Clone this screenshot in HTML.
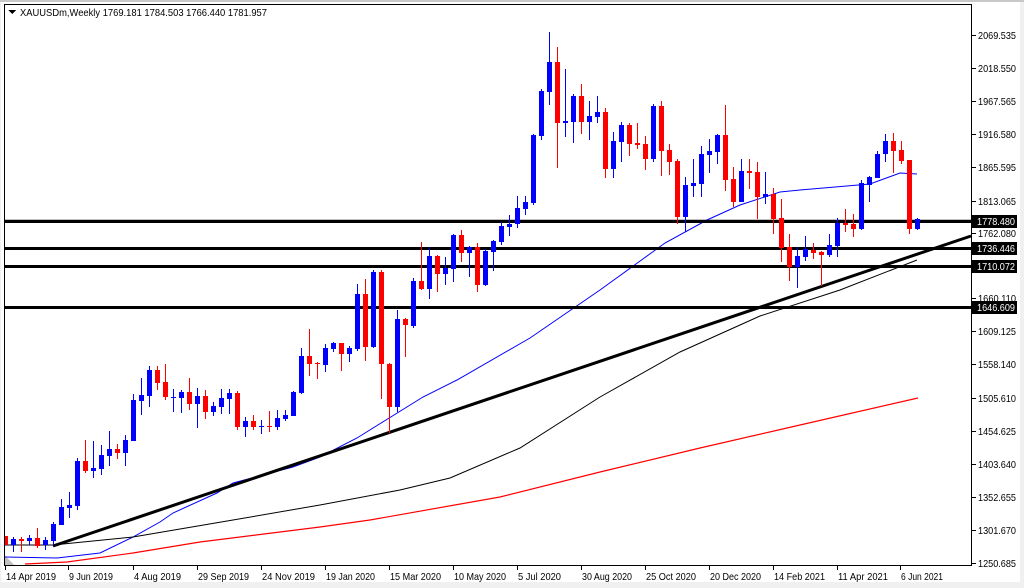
<!DOCTYPE html>
<html><head><meta charset="utf-8"><style>
html,body{margin:0;padding:0;background:#fff;width:1024px;height:588px;overflow:hidden}
svg{display:block}
text{font-family:"Liberation Sans",sans-serif;font-size:10.5px;fill:#000}
</style></head><body>
<svg id="s" width="1024" height="588" viewBox="0 0 1024 588" xmlns="http://www.w3.org/2000/svg" shape-rendering="crispEdges">
<rect x="0" y="0" width="1024" height="588" fill="#f0f0f0"/>
<rect x="1" y="2" width="1019" height="580" fill="#fff"/>
<line x1="0" y1="1" x2="1024" y2="1" stroke="#a0a0a0"/>
<rect x="4.5" y="4.5" width="967" height="561" fill="#fff" stroke="#000"/>
<polygon points="5,556 5,565 14,565" fill="#c0c0c0"/>
<polygon points="8,10 16,10 12,14" fill="#000"/>
<text x="20" y="16" textLength="247" lengthAdjust="spacingAndGlyphs">XAUUSDm,Weekly  1769.181 1784.503 1766.440 1781.957</text>
<g id="g"></g>
</svg>
<script>
var g=document.getElementById('g'),h='';
function L(pts,c,w){h+='<polyline fill="none" stroke="'+c+'" stroke-width="'+w+'" shape-rendering="auto" points="'+pts+'"/>';}
h+='<line x1="5" y1="219.5" x2="971" y2="219.5" stroke="#c0c0c0"/>';
L("5,557 57,558 100,553 133,537 160,522 173,513 217,493 233,483 293,467 320,457 357,438 423,397 457,380 530,338 600,290 665,243 707,220 740,205 780,192 800,190 870,184 900,173 917,174","#0000ff",1);
L("5,545 53,545 133,537 233,520 320,505 400,490 450,478 520,448 600,397 680,352 760,316 840,290 917,260","#000",1);
L("25,564 67,562 133,553 200,542 320,527 370,520 500,497 600,472 700,448 800,425 918,398","#ff0000",1.2);
[221,248,266,307].forEach(function(y){h+='<rect x="5" y="'+(y-1)+'" width="966" height="3" fill="#000"/>';});
h+='<line x1="53" y1="546" x2="971" y2="236" stroke="#000" stroke-width="3" shape-rendering="auto"/>';
var C=[[536,545,536,545],[545,539,537,552],[539,541,537,552],[541,538,535,545],[538,546,528,548],[545,540,537,550],[541,524,522,545],[525,507,499,525],[508,505,492,518],[506,461,458,510],
[461,471,440,473],[471,468,441,478],[469,455,445,475],[456,449,431,466],[449,453,444,459],[453,440,435,466],[441,400,394,441],[401,395,378,415],[396,370,366,407],[370,383,366,390],
[382,397,364,400],[397.5,397,389,412],[398,392,390,413],[392,404,378,410],[404,396,388,428],[396,412,390,419],[412,406,402,416],[407,398,389,414],[399,393,389,414],[393,427,391,430],
[427,421,417,437],[421,427,415,430],[426.5,426,420,434],[426,427,411,432],[427,418,410,430],[419,415,410,421],[416,392,391,416],[393,356,348,394],[356,364,329,376],[363,364,362,379],
[365,348,344,372],[349,343,342,352],[343,354,343,371],[354,348,346,362],[349,294,284,351],[294,347,279,361],[347,272,270,348],[272,364,270,399],[364,407,363,433],[407,319,310,412],
[319,325,318,357],[326,281,278,328],[281,289,242,290],[289,256,247,299],[256,274,255,292],[274,268,257,285],[269,235,234,282],[235,253,230,262],[253,247,246,277],[247,285,243,292],
[285,251,249,286],[252,241,240,271],[242,226,222,245],[227,224,215,236],[224,208,196,228],[209,202,196,215],[203,135,134,205],[136,91,89,140],[92,62,32,105],[62,123,47,168],
[123,121,69,137],[122,96,94,143],[96,122,84,134],[122,116,101,140],[117,112,96,123],[112,169,108,178],[169,141,132,178],[142,125,122,162],[125,144,123,156],[143,145,123,149],
[144,159,136,170],[159,106,104,162],[106,151,101,176],[150,162,144,175],[161,217,159,224],[217,185,177,232],[186,183,159,197],[184,154,146,197],[155,151,139,173],[152,135,134,164],
[135,180,105,191],[179,202,167,207],[202,171,159,202],[171,173,159,189],[172,197,162,219],[197,194,172,204],[194,219,188,234],[218,248,199,262],[247,267,234,281],[267,256,247,288],
[257,249,236,261],[250,253,243,259],[252,255,251,286],[255,245,234,257],[246,223,218,257],[223,225,209,232],[224,229,214,237],[229,183,180,230],[185,177,176,202],[178,154,151,178],
[154,141,134,162],[141,151,133,173],[150,161,141,164],[160,229,160,234],[229,219,218,230]];
C.forEach(function(c,i){var x=Math.round(5.3+8*i);var up=c[1]<c[0];var col=up?'#0000ff':'#ff0000';
var t=Math.min(c[0],c[1]),b=Math.max(c[0],c[1]);if(b-t<1)b=t+1;
h+='<rect x="'+x+'" y="'+c[2]+'" width="1" height="'+(c[3]-c[2])+'" fill="'+col+'"/>';
var bx=x-2;if(bx<5)bx=5;h+='<rect x="'+bx+'" y="'+t+'" width="'+(x+3-bx)+'" height="'+(b-t)+'" fill="'+col+'"/>';});
var R=[["2069.535",35],["2018.550",68],["1967.565",101],["1916.580",134],["1865.595",167],["1813.065",201],["1762.080",233],["1660.110",298],["1609.125",331],["1558.140",364],["1505.610",398],["1454.625",431],["1403.640",464],["1352.655",497],["1301.670",530],["1250.685",563]];
R.forEach(function(r){h+='<rect x="972" y="'+r[1]+'" width="4" height="1" fill="#000"/><text x="978" y="'+(r[1]+4)+'" textLength="38" lengthAdjust="spacingAndGlyphs">'+r[0]+'</text>';});
[["1778.480",221],["1736.446",248],["1710.072",266],["1646.609",307]].forEach(function(r){h+='<rect x="972" y="'+(r[1]-6)+'" width="45" height="13" fill="#000"/><text x="977" y="'+(r[1]+4)+'" textLength="38" lengthAdjust="spacingAndGlyphs" style="fill:#fff">'+r[0]+'</text>';});
var B=[["14 Apr 2019",5,50],["9 Jun 2019",68,44],["4 Aug 2019",133,47],["29 Sep 2019",197,51],["24 Nov 2019",261,53],["19 Jan 2020",325,49],["15 Mar 2020",389,51],["10 May 2020",453,52],["5 Jul 2020",517,43],["30 Aug 2020",581,50],["25 Oct 2020",645,50],["20 Dec 2020",709,51],["14 Feb 2021",773,51],["11 Apr 2021",837,50],["6 Jun 2021",900,42]];
B.forEach(function(b){h+='<rect x="'+b[1]+'" y="566" width="1" height="4" fill="#000"/><text x="'+(b[1]+1)+'" y="580" textLength="'+b[2]+'" lengthAdjust="spacingAndGlyphs">'+b[0]+'</text>';});
g.innerHTML=h;
</script>
</body></html>
